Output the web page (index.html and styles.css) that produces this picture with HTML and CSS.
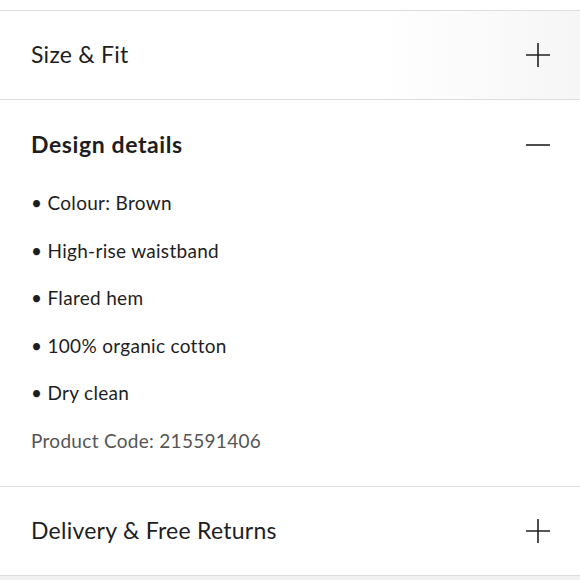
FILE: index.html
```html
<!DOCTYPE html>
<html>
<head>
<meta charset="utf-8">
<link rel="stylesheet" href="styles.css">
</head>
<body>
<div class="page">
  <div class="top"></div>
  <section class="acc">
    <div class="acc-head">
      <span class="acc-title">Size &amp; Fit</span>
      <svg class="icon" viewBox="0 0 24 24" width="24" height="24"><path d="M12 0V24M0 12H24" stroke="#222" stroke-width="1.6" fill="none"/></svg>
    </div>
  </section>
  <section class="acc open">
    <div class="acc-head">
      <span class="acc-title bold">Design details</span>
      <svg class="icon" viewBox="0 0 24 24" width="24" height="24"><path d="M0 12H24" stroke="#222" stroke-width="1.6" fill="none"/></svg>
    </div>
    <ul class="details">
      <li>• Colour: Brown</li>
      <li>• High-rise waistband</li>
      <li>• Flared hem</li>
      <li>• 100% organic cotton</li>
      <li>• Dry clean</li>
    </ul>
    <p class="code">Product Code: 215591406</p>
  </section>
  <section class="acc">
    <div class="acc-head">
      <span class="acc-title">Delivery &amp; Free Returns</span>
      <svg class="icon" viewBox="0 0 24 24" width="24" height="24"><path d="M12 0V24M0 12H24" stroke="#222" stroke-width="1.6" fill="none"/></svg>
    </div>
  </section>
  <div class="bottom"></div>
</div>
</body>
</html>
```
FILE: styles.css
```css
html, body {
  margin: 0;
  padding: 0;
  background: #ffffff;
}
.page {
  font-family: Lato, "Noto Sans", sans-serif;
  color: #1e1e1e;
  width: 580px;
  height: 580px;
  overflow: hidden;
  background: linear-gradient(90deg, #ffffff 0%, #ffffff 70%, #f7f7f7 100%);
}
.top {
  height: 10px;
  background: #ffffff;
}
.acc {
  border-top: 1.5px solid #dddddd;
  background: #ffffff;
}
.acc:first-of-type {
  background: linear-gradient(90deg, #ffffff 0%, #ffffff 65%, #f6f6f6 100%);
}
.acc-head {
  height: 88px;
  display: flex;
  align-items: center;
  justify-content: space-between;
  padding: 0 30px 0 31px;
}
.open .acc-head {
  height: 90px;
}
.acc-title {
  font-size: 23px;
  letter-spacing: 0.25px;
  line-height: 30px;
  margin-top: -3px;
}
.acc-title.bold {
  font-weight: 700;
  font-size: 23px;
  letter-spacing: 0.6px;
}
.icon {
  display: block;
}
.details {
  list-style: none;
  margin: -11px 0 0 0;
  padding: 0 0 0 31px;
}
.details li {
  font-size: 19px;
  letter-spacing: 0.3px;
  line-height: 47.5px;
}
.code {
  margin: 0;
  padding: 0 0 22px 31px;
  font-size: 19px;
  letter-spacing: 0.3px;
  line-height: 47.5px;
  color: #555555;
}
.bottom {
  border-top: 1.5px solid #dddddd;
  height: 20px;
  background: #f1f1f1;
}
```
